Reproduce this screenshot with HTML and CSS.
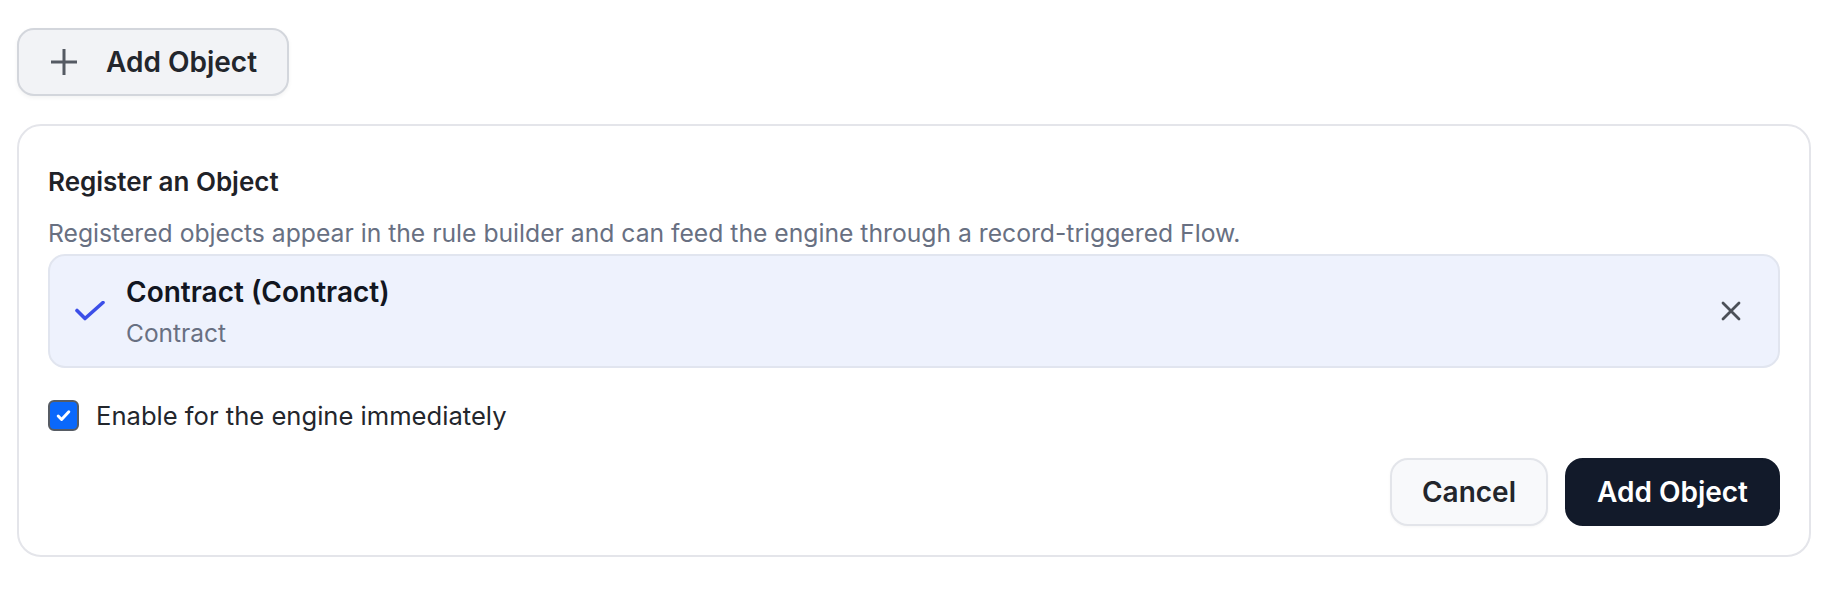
FILE: index.html
```html
<!DOCTYPE html>
<html lang="en">
<head>
    <meta charset="UTF-8">
    <meta name="viewport" content="width=device-width, initial-scale=1.0">
    <title>Objects</title>
    <link rel="stylesheet" href="styles.css">
</head>
<body>
    <div class="page">
        <button class="btn-add">
            <svg class="plus" viewBox="0 0 28 28" width="28" height="28">
                <path d="M14 1v26M1 14h26" stroke="#555a63" stroke-width="3" fill="none"/>
            </svg>
            <span>Add Object</span>
        </button>

        <div class="card">
            <h3 class="card-title">Register an Object</h3>
            <p class="card-desc">Registered objects appear in the rule builder and can feed the engine through a record-triggered Flow.</p>

            <div class="selected">
                <svg class="check" viewBox="0 0 30 20" width="30" height="20">
                    <path d="M2 9.5l8 8 18-16" stroke="#3c4fe8" stroke-width="3.6" fill="none" stroke-linecap="round" stroke-linejoin="round"/>
                </svg>
                <div class="selected-text">
                    <div class="selected-name">Contract (Contract)</div>
                    <div class="selected-api">Contract</div>
                </div>
                <button class="clear">
                    <svg viewBox="0 0 20 20" width="20" height="20">
                        <path d="M2 2l16 16M18 2L2 18" stroke="#4b5058" stroke-width="2.8" fill="none" stroke-linecap="round"/>
                    </svg>
                </button>
            </div>

            <label class="enable">
                <span class="box">
                    <svg viewBox="0 0 16 16" width="17" height="17">
                        <path d="M3 8.5l3.2 3.2L13 4.5" stroke="#fff" stroke-width="2.8" fill="none" stroke-linecap="round" stroke-linejoin="round"/>
                    </svg>
                </span>
                Enable for the engine immediately
            </label>

            <div class="actions">
                <button class="btn-cancel">Cancel</button>
                <button class="btn-primary">Add Object</button>
            </div>
        </div>
    </div>
</body>
</html>
```

FILE: styles.css
```css
* {
    box-sizing: border-box;
}
body {
    margin: 0;
    background: #fff;
    font-family: Inter, "Noto Sans", sans-serif;
    color: #1f2228;
}
.page {
    padding: 28px 19px 0 17px;
}
button {
    font-family: inherit;
    cursor: pointer;
}
.btn-add {
    display: flex;
    align-items: center;
    gap: 28px;
    height: 68px;
    padding: 0 30px 0 31px;
    background: #f2f3f6;
    border: 2px solid #d3d6dc;
    border-radius: 17px;
    box-shadow: 0 2px 4px rgba(0, 0, 0, 0.05);
    font-size: 28px;
    font-weight: 600;
    color: #23262c;
}
.plus {
    display: block;
}
.card {
    margin-top: 28px;
    border: 2px solid #e4e5ea;
    border-radius: 24px;
    padding: 38px 29px 29px;
}
.card-title {
    margin: 0;
    font-size: 26px;
    line-height: 36px;
    font-weight: 600;
    color: #1f2228;
}
.card-desc {
    margin: 16px 0 3px;
    font-size: 24.7px;
    line-height: 35px;
    color: #687082;
}
.selected {
    display: flex;
    align-items: center;
    background: #eef2fd;
    border: 2px solid #e1e5ef;
    border-radius: 17px;
    padding: 15px 27px 15px 25px;
}
.check {
    display: block;
    margin-right: 21px;
}
.selected-text {
    flex: 1;
}
.selected-name {
    font-size: 28px;
    line-height: 42px;
    font-weight: 600;
    color: #121621;
}
.selected-api {
    margin-top: 3px;
    font-size: 24.5px;
    line-height: 35px;
    color: #687082;
}
.clear {
    display: flex;
    align-items: center;
    justify-content: center;
    width: 40px;
    height: 40px;
    padding: 0;
    border: none;
    background: transparent;
}
.enable {
    display: flex;
    align-items: center;
    gap: 17px;
    margin-top: 30px;
    font-size: 25.6px;
    line-height: 35px;
    color: #23262c;
}
.box {
    display: flex;
    align-items: center;
    justify-content: center;
    width: 31px;
    height: 31px;
    background: #0a68fb;
    border: 2px solid #575c64;
    border-radius: 6px;
}
.actions {
    display: flex;
    justify-content: flex-end;
    gap: 17px;
    margin-top: 25px;
}
.btn-cancel,
.btn-primary {
    height: 68px;
    border-radius: 18px;
    font-size: 28px;
    font-weight: 600;
}
.btn-cancel {
    padding: 0 30px;
    background: #f8f9fb;
    border: 2px solid #e3e5ea;
    color: #23262c;
    box-shadow: 0 1px 3px rgba(0, 0, 0, 0.04);
}
.btn-primary {
    padding: 0 30px;
    background: #121a2a;
    border: 2px solid #121a2a;
    color: #fff;
}
```
